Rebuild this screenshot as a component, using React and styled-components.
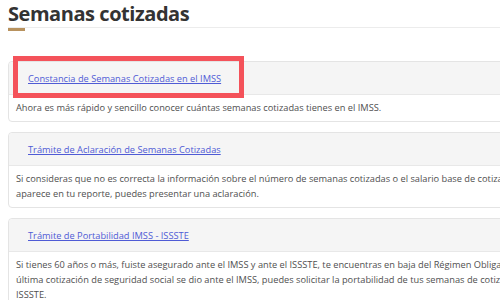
import React from 'react';
import styled, { createGlobalStyle } from 'styled-components';

const GlobalStyle = createGlobalStyle`
  html, body {
    margin: 0;
    padding: 0;
    background: #ffffff;
    overflow: hidden;
  }
  body {
    font-family: "Open Sans", "Liberation Sans", sans-serif;
    color: #545454;
  }
`;

const Page = styled.div`
  width: 500px;
  height: 300px;
  overflow: hidden;
  padding-left: 8px;
  box-sizing: border-box;
`;

const Title = styled.h1`
  margin: 0;
  padding-top: 1px;
  font-size: 20px;
  line-height: 26px;
  font-weight: 700;
  color: #333333;
  letter-spacing: -0.45px;
`;

const Divider = styled.div`
  position: relative;
  height: 1px;
  background: #ececec;
  margin-bottom: 33px;
  width: 600px;
  &::before {
    content: '';
    position: absolute;
    left: 0;
    top: 1px;
    width: 17px;
    height: 3px;
    background: #b8925e;
  }
`;

const Panel = styled.section`
  position: relative;
  width: 600px;
  border: 1px solid #e4e4e4;
  border-radius: 4px;
  margin-bottom: 10px;
  background: #ffffff;
`;

const PanelHeading = styled.div`
  height: 32px;
  display: flex;
  align-items: center;
  padding-left: 19px;
  background: #f5f5f5;
  border-bottom: 1px solid #e8e8e8;
  border-radius: 4px 4px 0 0;
`;

const Link = styled.a`
  font-size: 9.25px;
  color: #4f5bd5;
  text-decoration: underline;
  cursor: pointer;
`;

const PanelBody = styled.p`
  margin: 0;
  padding: 5px 7px 6px;
  font-size: 9.25px;
  line-height: 15px;
  white-space: nowrap;
  color: #4f4f4f;
`;

const Highlight = styled.div`
  position: absolute;
  left: 4px;
  top: -6px;
  width: 231px;
  height: 42px;
  box-sizing: border-box;
  border: 5px solid #f4525a;
  pointer-events: none;
`;

const items = [
  {
    title: 'Constancia de Semanas Cotizadas en el IMSS',
    lines: ['Ahora es más rápido y sencillo conocer cuántas semanas cotizadas tienes en el IMSS.'],
    marked: true,
  },
  {
    title: 'Trámite de Aclaración de Semanas Cotizadas',
    lines: [
      'Si consideras que no es correcta la información sobre el número de semanas cotizadas o el salario base de cotización que',
      'aparece en tu reporte, puedes presentar una aclaración.',
    ],
  },
  {
    title: 'Trámite de Portabilidad IMSS - ISSSTE',
    lines: [
      'Si tienes 60 años o más, fuiste asegurado ante el IMSS y ante el ISSSTE, te encuentras en baja del Régimen Obligatorio del IMSS y tu',
      'última cotización de seguridad social se dio ante el IMSS, puedes solicitar la portabilidad de tus semanas de cotización al',
      'ISSSTE.',
    ],
  },
];

export default function App() {
  return (
    <Page>
      <GlobalStyle />
      <Title>Semanas cotizadas</Title>
      <Divider />
      {items.map((item) => (
        <Panel key={item.title}>
          <PanelHeading>
            <Link>{item.title}</Link>
          </PanelHeading>
          <PanelBody>
            {item.lines.map((line, i) => (
              <React.Fragment key={i}>
                {i > 0 && <br />}
                {line}
              </React.Fragment>
            ))}
          </PanelBody>
          {item.marked && <Highlight />}
        </Panel>
      ))}
    </Page>
  );
}
